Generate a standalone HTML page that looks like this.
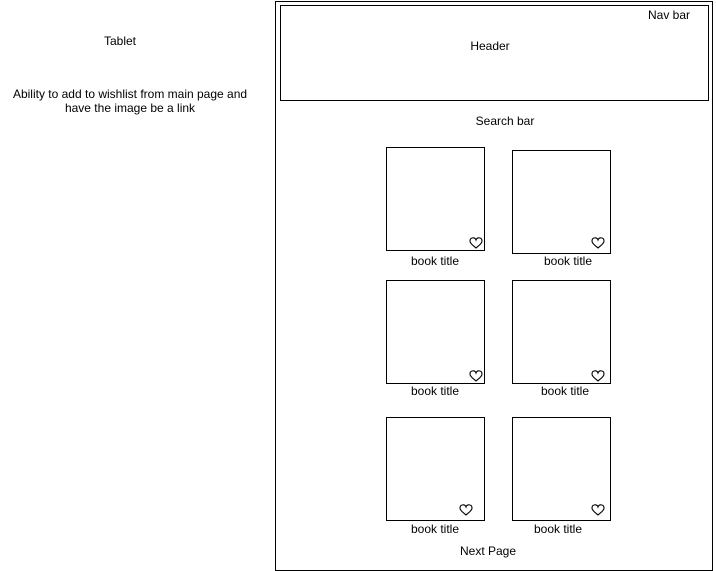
<!DOCTYPE html><html><head><style>
body{margin:0;width:716px;height:571px;background:#fff;position:relative;font-family:"Liberation Sans",Arial,sans-serif;font-size:12px;color:#000;overflow:hidden}
.a{position:absolute}
.b{position:absolute;border:1px solid #000;box-sizing:border-box}
.t{position:absolute;transform:translateX(-50%);white-space:nowrap;line-height:14px}
.h{position:absolute;width:11px;height:10px}
</style></head><body>
<div class="t" style="left:120px;top:34px">Tablet</div>
<div class="t" style="left:130px;top:87px;text-align:center">Ability to add to wishlist from main page and<br>have the image be a link</div>
<div class="b" style="left:275px;top:1px;width:438px;height:570px"></div>
<div class="b" style="left:280px;top:5px;width:429px;height:96px"></div>
<div class="t" style="left:669px;top:8px">Nav bar</div>
<div class="t" style="left:490px;top:39px">Header</div>
<div class="t" style="left:505px;top:114px">Search bar</div>
<div class="b" style="left:386px;top:147px;width:99px;height:104px"></div>
<div class="b" style="left:512px;top:150px;width:99px;height:104px"></div>
<div class="b" style="left:386px;top:280px;width:99px;height:104px"></div>
<div class="b" style="left:512px;top:280px;width:99px;height:104px"></div>
<div class="b" style="left:386px;top:417px;width:99px;height:104px"></div>
<div class="b" style="left:512px;top:417px;width:99px;height:104px"></div>
<div class="t" style="left:435px;top:254px">book title</div>
<div class="t" style="left:568px;top:254px">book title</div>
<div class="t" style="left:435px;top:384px">book title</div>
<div class="t" style="left:565px;top:384px">book title</div>
<div class="t" style="left:435px;top:522px">book title</div>
<div class="t" style="left:558px;top:522px">book title</div>
<div class="t" style="left:488px;top:544px">Next Page</div>
<svg width="716" height="571" class="a" style="left:0;top:0">
<defs><path id="hh" d="M0,-3 C-1,-6 -6,-6 -6,-2 C-6,1 -2,3 0,5 C2,3 6,1 6,-2 C6,-6 1,-6 0,-3Z" fill="none" stroke="#000" stroke-width="1.1"/></defs>
<use href="#hh" x="476" y="243"/><use href="#hh" x="598" y="243"/>
<use href="#hh" x="476" y="376"/><use href="#hh" x="598" y="376"/>
<use href="#hh" x="466" y="510"/><use href="#hh" x="598" y="510"/>
</svg>
</body></html>
